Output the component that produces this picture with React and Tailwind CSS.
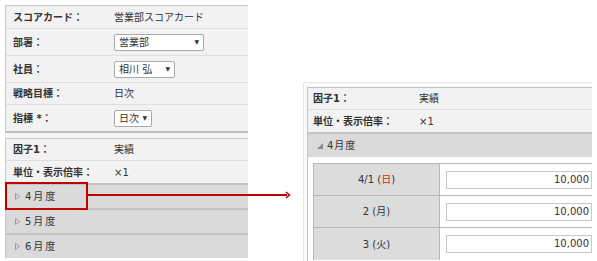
import React from "react";

const font = { fontFamily: '"DejaVu Sans", "Noto Sans CJK JP", sans-serif' };

function Select({ label, w }) {
  return (
    <div
      className={`flex items-center justify-between bg-white border border-[#a9a9a9] rounded-[2px] h-[17px] pl-[4px] pr-[4px] text-[10px] text-[#333] ${w}`}
    >
      <span>{label}</span>
      <span className="text-[6px] leading-none">▼</span>
    </div>
  );
}

function Row({ label, children, h, last }) {
  return (
    <div
      className={`flex items-center ${h} ${last ? "" : "border-b border-[#dedede]"} bg-[#f2f2f2]`}
    >
      <div className="w-[108px] pl-[7px] font-bold text-[#333]">{label}</div>
      <div className="text-[#333]">{children}</div>
    </div>
  );
}

function ClosedTri() {
  return (
    <svg width="5" height="7" viewBox="0 0 5 7" className="shrink-0">
      <path d="M0.5 0.5 L4.5 3.5 L0.5 6.5 Z" fill="none" stroke="#9a9a9a" strokeWidth="1" />
    </svg>
  );
}

function OpenTri() {
  return (
    <svg width="6" height="6" viewBox="0 0 6 6" className="shrink-0">
      <path d="M6 0 L6 6 L0 6 Z" fill="#8a8a8a" />
    </svg>
  );
}

function Month({ label }) {
  return (
    <div className="flex items-center h-[25px] border-t-2 border-[#c4c4c4] bg-[#dadada] pl-[9px] gap-[5px]">
      <ClosedTri />
      <span className="text-[#333] tracking-[2px]">{label}</span>
    </div>
  );
}

function DayRow({ day, last }) {
  return (
    <div className={`flex h-[32px] ${last ? "" : "border-b border-[#b8b8b8]"}`}>
      <div className="w-[127px] bg-[#dcdcdc] border-r border-[#b8b8b8] flex items-center justify-center text-[#333]">
        {day}
      </div>
      <div className="flex-1 flex items-center pl-[6px] bg-white">
        <div className="w-[146px] h-[18px] border border-[#c8c8c8] bg-white text-right pr-[2px] text-[#333] leading-[16px]">
          10,000
        </div>
      </div>
    </div>
  );
}

export default function App() {
  return (
    <div className="relative w-[597px] h-[261px] bg-white overflow-hidden text-[10px]" style={font}>
      <div className="flex">
        {/* Left panel */}
        <div className="ml-[5px] mt-[5px] w-[243px] flex flex-col">
          <div className="border-t border-l border-[#c8c8c8] border-b-2 border-b-[#bdbdbd]">
            <Row label="スコアカード：" h="h-[23px]">営業部スコアカード</Row>
            <Row label="部署：" h="h-[27px]">
              <Select label="営業部" w="w-[90px]" />
            </Row>
            <Row label="社員：" h="h-[27px]">
              <Select label="相川 弘" w="w-[61px]" />
            </Row>
            <Row label="戦略目標：" h="h-[22px]">日次</Row>
            <Row label="指標 *：" h="h-[26px]" last>
              <Select label="日次" w="w-[38px]" />
            </Row>
          </div>
          <div className="h-[5px] bg-[#f7f7f7]" />
          <div className="border-t border-l border-[#c8c8c8]">
            <Row label="因子1：" h="h-[22px]">実績</Row>
            <Row label="単位・表示倍率：" h="h-[22px]" last>×1</Row>
            <Month label="4月度" />
            <Month label="5月度" />
            <Month label="6月度" />
          </div>
        </div>

        {/* Right panel */}
        <div className="ml-[55px] mt-[82px] w-[289px] h-[179px] border-t border-l border-[#e6e6e6] bg-[#fafafa] pt-[4px] pl-[3px]">
          <div className="border-t border-l border-[#c4c4c4] bg-white h-full">
            <div className="flex items-center h-[22px] border-b border-[#dedede] bg-[#f2f2f2]">
              <div className="w-[111px] pl-[5px] font-bold text-[#333]">因子1：</div>
              <div className="text-[#333]">実績</div>
            </div>
            <div className="flex items-center h-[22px] bg-[#f2f2f2]">
              <div className="w-[111px] pl-[5px] font-bold text-[#333]">単位・表示倍率：</div>
              <div className="text-[#333]">×1</div>
            </div>
            <div className="flex items-center h-[25px] border-t-2 border-[#c4c4c4] bg-[#dadada] pl-[9px] gap-[4px]">
              <OpenTri />
              <span className="text-[#333] tracking-[1px]">4月度</span>
            </div>
            <div className="pl-[5px] pt-[6px] bg-white">
              <div className="border-t border-l border-[#b8b8b8]">
                <DayRow
                  day={
                    <span>
                      4/1 (<span className="text-[#e02020]">日</span>)
                    </span>
                  }
                />
                <DayRow day="2 (月)" />
                <DayRow day="3 (火)" last />
              </div>
            </div>
          </div>
        </div>
      </div>

      {/* Annotation: red box and arrow */}
      <div className="absolute left-[5px] top-[182px] w-[83px] h-[28px] border-2 border-[#c00000]" />
      <div className="absolute left-[88px] top-[194px] w-[199px] h-[2px] bg-[#c00000]" />
      <svg className="absolute left-[285px] top-[191px]" width="6" height="8" viewBox="0 0 6 8">
        <path d="M1 1 L4.5 4 L1 7" fill="none" stroke="#c00000" strokeWidth="1.5" />
      </svg>
    </div>
  );
}
